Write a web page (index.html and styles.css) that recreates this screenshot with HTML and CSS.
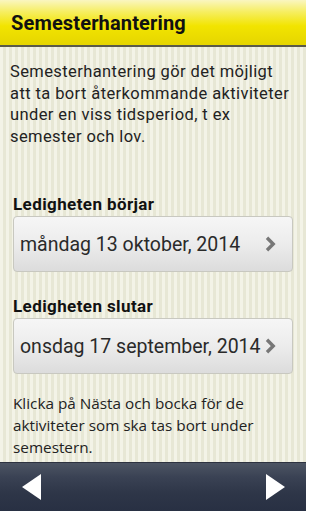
FILE: index.html
```html
<!DOCTYPE html>
<html lang="sv">
<head>
<meta charset="utf-8">
<title>Semesterhantering</title>
<link rel="stylesheet" href="styles.css">
</head>
<body>
<div class="screen">
  <header class="topbar">
    <h1 class="title">Semesterhantering</h1>
  </header>
  <main class="content">
    <p class="intro">Semesterhantering gör det möjligt att ta bort återkommande aktiviteter under en viss tidsperiod, t ex semester och lov.</p>
    <section class="field first">
      <h2 class="label">Ledigheten börjar</h2>
      <button class="picker" type="button">
        <span class="date">måndag 13 oktober, 2014</span>
        <svg class="chev" width="11" height="16" viewBox="0 0 11 16"><path d="M2 1.8 L8.2 8 L2 14.2" fill="none" stroke="#777777" stroke-width="3.4"/></svg>
      </button>
    </section>
    <section class="field second">
      <h2 class="label">Ledigheten slutar</h2>
      <button class="picker" type="button">
        <span class="date">onsdag 17 september, 2014</span>
        <svg class="chev" width="11" height="16" viewBox="0 0 11 16"><path d="M2 1.8 L8.2 8 L2 14.2" fill="none" stroke="#777777" stroke-width="3.4"/></svg>
      </button>
    </section>
    <p class="hint">Klicka på Nästa och bocka för de aktiviteter som ska tas bort under semestern.</p>
  </main>
  <footer class="bottombar">
    <button class="nav" type="button" aria-label="Föregående">
      <svg width="20" height="26" viewBox="0 0 20 26"><polygon points="19,0 19,26 0,13" fill="#ffffff"/></svg>
    </button>
    <button class="nav" type="button" aria-label="Nästa">
      <svg width="20" height="26" viewBox="0 0 20 26"><polygon points="1,0 1,26 20,13" fill="#ffffff"/></svg>
    </button>
  </footer>
</div>
</body>
</html>
```
FILE: styles.css
```css
* { box-sizing: border-box; }
html, body { margin: 0; padding: 0; }
body {
  width: 306px;
  height: 511px;
  overflow: hidden;
  font-family: Roboto, "Liberation Sans", sans-serif;
}
.screen {
  width: 306px;
  height: 511px;
  display: flex;
  flex-direction: column;
  background: repeating-linear-gradient(90deg, #f3f3e7 0px, #f3f3e7 3px, #e7e7d5 3px, #e7e7d5 6px);
}
.topbar {
  height: 47px;
  flex: 0 0 47px;
  background: linear-gradient(180deg, #faf6c0 0px, #f6ee60 12px, #f2e400 26px, #e6d600 44px);
  border-bottom: 2px solid #5a5a4a;
  display: flex;
  align-items: center;
  padding-left: 11px;
}
.title {
  margin: 0;
  font-size: 20px;
  font-weight: 700;
  letter-spacing: 0.15px;
  color: #111;
  line-height: 1;
  padding-top: 1px;
}
.content {
  flex: 1;
  padding: 0 8px 0 10px;
}
.intro {
  margin: 14px 0 0;
  font-size: 16.5px;
  letter-spacing: 0.4px;
  line-height: 21.5px;
  color: #222;
}
.field.first { margin-top: 47px; }
.field.second { margin-top: 24px; }
.label {
  margin: 0 0 0 3px;
  font-size: 17px;
  font-weight: 700;
  letter-spacing: 0.4px;
  line-height: 20px;
  color: #111;
}
.picker {
  margin: 2px 0 0 3px;
  width: 280px;
  height: 56px;
  border: 1px solid #c8c8c0;
  border-radius: 4px;
  background: linear-gradient(180deg, #f6f6f6 0%, #ececec 50%, #dcdcdc 100%);
  display: flex;
  align-items: center;
  justify-content: space-between;
  padding: 0 16px 0 6px;
  font-family: Roboto, "Liberation Sans", sans-serif;
  font-size: 19.5px;
  color: #2a2a2a;
  cursor: pointer;
}
.date { white-space: nowrap; }
.chev { flex: 0 0 auto; }
.hint {
  margin: 18px 0 0 3px;
  font-family: "Open Sans", "DejaVu Sans", sans-serif;
  font-size: 15.3px;
  line-height: 22px;
  color: #222;
}
.bottombar {
  height: 49px;
  flex: 0 0 49px;
  border-top: 1px solid #2e3340;
  background: linear-gradient(180deg, #4d5563 0px, #3a4254 14px, #2e3648 30px, #283043 48px);
  display: flex;
  justify-content: space-between;
  align-items: center;
  padding: 0 21px 0 22px;
}
.nav {
  border: 0;
  background: none;
  padding: 0;
  width: 20px;
  height: 26px;
  display: flex;
  cursor: pointer;
}
```
